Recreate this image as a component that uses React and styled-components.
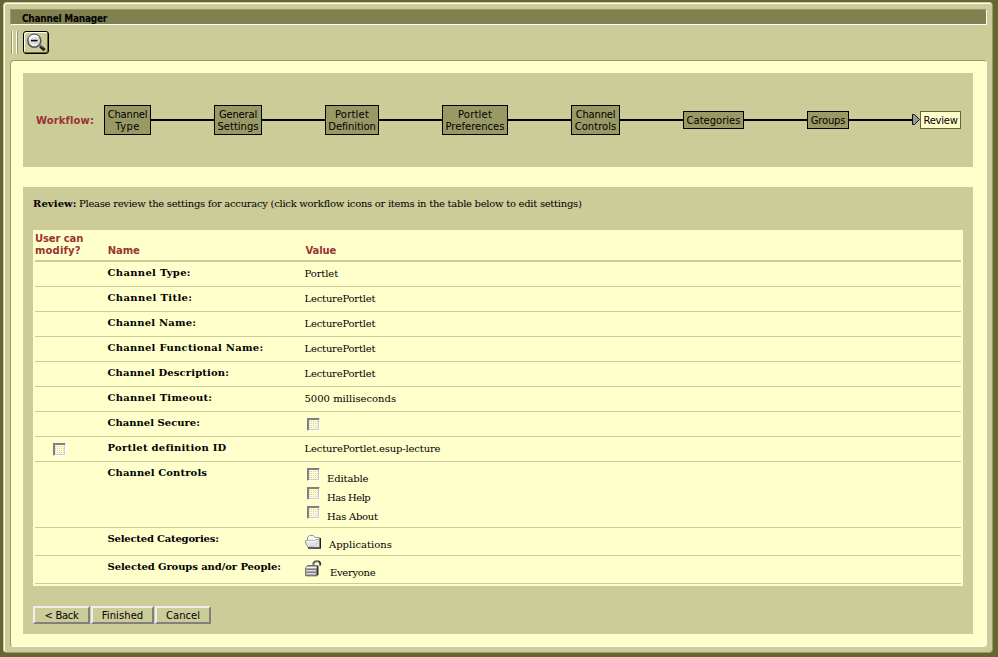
import React from "react";
import styled, { createGlobalStyle } from "styled-components";

const Global = createGlobalStyle`
  body { margin: 0; background: #666633; overflow: hidden; }
  *, *::before, *::after { box-sizing: border-box; }
`;
const sans = '"DejaVu Sans", Verdana, sans-serif';
const serif = '"DejaVu Serif", Georgia, serif';

const Page = styled.div`
  width: 998px;
  height: 657px;
  padding: 2px 5px 4px 3px;
  background: #666633;
  color: #000;
`;
const Frame = styled.div`
  height: 651px;
  border: 1px solid #cccc99;
  border-right-color: #999966;
  border-bottom-color: #999966;
  border-radius: 4px;
  background: #cccc99;
`;
const FrameInner = styled.div`
  height: 649px;
  border: 0 solid #fff;
  border-width: 1px 0 0 1px;
  border-radius: 3px;
  padding: 5px;
  display: flex;
  flex-direction: column;
`;
const TitleBar = styled.header`
  height: 16px;
  flex: none;
  border: 1px solid #999966;
  border-right-color: #fff;
  border-bottom-color: #fff;
  border-radius: 1px;
  background: #808050;
  padding-left: 11px;
  font: bold 10px/17px "DejaVu Sans Condensed", "DejaVu Sans", sans-serif;
  font-stretch: condensed;
  letter-spacing: -0.25px;
`;
const Toolbar = styled.div`
  height: 35px;
  flex: none;
  display: flex;
  align-items: flex-start;
  padding: 5px 0 0 1px;
`;
const Grip = styled.div`
  width: 7px;
  height: 23px;
  margin: 1px 5px 0 0;
  background: linear-gradient(to right, #999966 1px, #fff 1px 2px, transparent 2px 5px, #fff 5px 6px, #999966 6px);
`;
const ToolButton = styled.button`
  width: 26px;
  height: 23px;
  padding: 0;
  border: 1px solid #000;
  border-radius: 3px;
  background: #cccc99;
  box-shadow: inset 1px 1px #fff, inset -1px -1px #666633;
  margin-top: 1px;
  svg { display: block; }
`;
const Panel = styled.main`
  flex: 1;
  border: 1px solid #999966;
  border-right-color: #fff;
  border-bottom-color: #fff;
  border-radius: 4px;
  background: #ffffcc;
  padding: 12px 13px 12px 12px;
  display: flex;
  flex-direction: column;
  gap: 20px;
`;
const Workflow = styled.nav`
  height: 94px;
  flex: none;
  background: #cccc99;
  display: flex;
  align-items: center;
  padding: 0 0 0 13px;
`;
const WorkflowLabel = styled.span`
  width: 68px;
  flex: none;
  color: #993333;
  font: bold 10px/12px ${sans};
  letter-spacing: 0.11px;
  padding-top: 2px;
`;
const Step = styled.div`
  flex: none;
  width: ${(p) => p.$w}px;
  height: ${(p) => (p.$tall ? 30 : 18)}px;
  border: 1px solid ${(p) => (p.$current ? "#666633" : "#000")};
  background: ${(p) => (p.$current ? "#ffffcc" : "#999966")};
  font: 10px/12px ${sans};
  text-align: center;
  white-space: nowrap;
  padding-top: 3px;
`;
const Connector = styled.div`
  flex: none;
  width: 63px;
  height: 2px;
  background: #000;
`;
const Arrow = styled.svg`
  flex: none;
  width: 8px;
  height: 12px;
`;
const Text = styled.span`
  display: block;
  letter-spacing: ${(p) => p.$s || 0}px;
  white-space: nowrap;
`;
const Review = styled.section`
  height: 447px;
  background: #cccc99;
  padding: 10px;
`;
const Intro = styled.div`
  height: 33px;
  display: flex;
  gap: 2.5px;
  font: 10px/14px ${serif};
  b { letter-spacing: 0.09px; }
`;
const Table = styled.div`
  height: 356px;
  background: #ffffcc;
  padding: 2px;
`;
const Row = styled.div`
  height: ${(p) => p.$h || 25}px;
  display: grid;
  grid-template-columns: 72px 197px 1fr;
  border-bottom: 1px solid #cccc99;
`;
const HeadRow = styled(Row)`
  border-bottom-width: 2px;
  align-items: end;
  color: #993333;
  font: bold 10px/12px ${sans};
  padding-bottom: 3px;
`;
const HeadCell = styled.div`
  padding-left: ${(p) => p.$left || 0}px;
`;
const Name = styled.div`
  font: bold 10px/14px ${serif};
  padding: 4px 0 0 0.5px;
`;
const Value = styled.div`
  font: 10px/14px ${serif};
  padding: 5px 0 0 0.5px;
`;
const CheckCell = styled.div`
  padding: ${(p) => p.$pad};
`;
const Check = styled.div`
  flex: none;
  width: 13px;
  height: 13px;
  border: 1px solid #fff;
  border-top-color: #808080;
  border-left-color: #808080;
  box-shadow: inset 1px 1px #808080, inset -1px -1px #cccccc;
  background: #ffffcc conic-gradient(#d4d0c8 25%, #ffffcc 0) 0 0 / 2px 2px;
`;
const Options = styled.div`
  padding: 6px 0 0 3px;
`;
const Option = styled.div`
  display: flex;
  gap: 7px;
  height: 19px;
  font: 10px/14px ${serif};
  ${Text} { padding-top: 4px; }
`;
const IconValue = styled.div`
  display: flex;
  gap: 8px;
  font: 10px/14px ${serif};
  svg { display: block; flex: none; }
  ${Text} { padding-top: 10px; }
`;
const Actions = styled.div`
  display: flex;
  gap: 1px;
  padding-top: 20px;
`;
const Button = styled.button`
  width: ${(p) => p.$w}px;
  height: 18px;
  padding: 1px 0 0;
  border: 2px solid #808080;
  border-top-color: #eeeeee;
  border-left-color: #eeeeee;
  background: #cccc99;
  color: #000;
  font: 10px/12px ${sans};
  ${Text} { text-align: center; }
`;

const steps = [
  [47, [["Channel", -0.2], ["Type", 0.4]]],
  [48, [["General", -0.2], ["Settings", 0]]],
  [54, [["Portlet", 0.2], ["Definition", -0.1]]],
  [66, [["Portlet", 0.2], ["Preferences", 0.02]]],
  [49, [["Channel", -0.2], ["Controls", 0.02]]],
  [61, [["Categories", 0]]],
  [42, [["Groups", -0.2]]],
];
const rows = [
  ["Channel Type:", 0.33, "Portlet", -0.1],
  ["Channel Title:", 0.38, "LecturePortlet", -0.2],
  ["Channel Name:", 0.2, "LecturePortlet", -0.2],
  ["Channel Functional Name:", 0.25, "LecturePortlet", -0.2],
  ["Channel Description:", 0.14, "LecturePortlet", -0.2],
  ["Channel Timeout:", 0.28, "5000 milliseconds", 0],
];

const Magnifier = () => (
  <svg width="24" height="21" viewBox="0 0 24 21">
    <circle cx="10.3" cy="8.8" r="6.5" fill="#dcdcdc" stroke="#555" strokeWidth="1.5" />
    <path d="M5.6 7.5a5 5 0 0 1 8.6-2" fill="none" stroke="#fff" strokeWidth="2.2" />
    <path d="M7 11.5a5 5 0 0 0 6 1" fill="none" stroke="#f6f6f6" strokeWidth="1.4" />
    <path d="M7 8.6h6.5" stroke="#111" strokeWidth="1.6" />
    <path d="M14.9 13l2 1.8" stroke="#777" strokeWidth="2" />
    <path d="M16.4 14.3l4.2 3.9" stroke="#222" strokeWidth="3.2" />
    <path d="M17.2 14.2l1.6 1.4" stroke="#999" strokeWidth="0.8" />
  </svg>
);
const Folder = () => (
  <svg width="16" height="14" viewBox="0 0 16 14">
    <path d="M2.5 5V2l2-1.5h4l1.5 2h4.5V6" fill="#f4f4f4" stroke="#999" />
    <path d="M.5 5.5h9.5l2-1h2.5V12.5H3L.5 8z" fill="#e2e2e2" stroke="#999" />
    <path d="M1.5 6.2h9l2-1" fill="none" stroke="#fff" />
    <path d="M3.5 11.5h5l5-5" fill="none" stroke="#c4c4c4" />
    <path d="M3 13.2h12.4V3" fill="none" stroke="#222" strokeWidth="1.2" />
  </svg>
);
const OpenLock = () => (
  <svg width="17" height="17" viewBox="0 0 17 17">
    <path d="M8.5 6V3.2L10.3 1.3h3.4l1.5 1.5V5.5" fill="none" stroke="#333" strokeWidth="1.8" />
    <path d="M8.7 5V3.4l1.8-1.8h2.5" fill="none" stroke="#aaa" strokeWidth=".7" />
    <path d="M1 7l2-1.5h10.5v9L12 16.2H1z" fill="#333" />
    <path d="M.5 7.5l2-2h10l-1 2v8H.5z" fill="#aaa" stroke="#777" />
    <path d="M1 7.5h10.5" stroke="#f4f4f4" />
    <path d="M2 9.5h8.5M2 12.5h8.5" stroke="#777" />
    <path d="M2 10.5h8.5M2 13.5h8.5" stroke="#e0e0e0" />
  </svg>
);

export default function App() {
  return (
    <Page>
      <Global />
      <Frame>
        <FrameInner>
          <TitleBar>Channel Manager</TitleBar>
          <Toolbar>
            <Grip />
            <ToolButton aria-label="Zoom out"><Magnifier /></ToolButton>
          </Toolbar>
          <Panel>
            <Workflow>
              <WorkflowLabel>Workflow:</WorkflowLabel>
              {steps.map(([w, lines], i) => (
                <React.Fragment key={i}>
                  <Step $w={w} $tall={lines.length > 1}>
                    {lines.map(([t, s]) => <Text key={t} $s={s}>{t}</Text>)}
                  </Step>
                  <Connector />
                </React.Fragment>
              ))}
              <Arrow viewBox="0 0 8 12">
                <path d="M.5 .5h2L7.5 5.5 2.5 10.5h-2z" fill="#999" stroke="#111" />
              </Arrow>
              <Step $w={41} $current><Text $s={-0.25}>Review</Text></Step>
            </Workflow>
            <Review>
              <Intro>
                <b>Review:</b>
                <Text $s={-0.28}>
                  Please review the settings for accuracy (click workflow icons or items in the table below to edit settings)
                </Text>
              </Intro>
              <Table>
                <HeadRow $h={30}>
                  <HeadCell><Text $s={-0.1}>User can</Text><Text $s={0.16}>modify?</Text></HeadCell>
                  <HeadCell $left={0.8}><Text $s={-0.1}>Name</Text></HeadCell>
                  <HeadCell $left={1.5}><Text $s={-0.15}>Value</Text></HeadCell>
                </HeadRow>
                {rows.map(([name, ns, value, vs]) => (
                  <Row key={name}>
                    <span />
                    <Name><Text $s={ns}>{name}</Text></Name>
                    <Value><Text $s={vs}>{value}</Text></Value>
                  </Row>
                ))}
                <Row>
                  <span />
                  <Name><Text $s={0.02}>Channel Secure:</Text></Name>
                  <CheckCell $pad="6px 0 0 3px"><Check /></CheckCell>
                </Row>
                <Row>
                  <CheckCell $pad="6px 0 0 18px"><Check /></CheckCell>
                  <Name><Text $s={0.25}>Portlet definition ID</Text></Name>
                  <Value><Text $s={-0.15}>LecturePortlet.esup-lecture</Text></Value>
                </Row>
                <Row $h={66}>
                  <span />
                  <Name><Text $s={0.11}>Channel Controls</Text></Name>
                  <Options>
                    <Option><Check /><Text $s={-0.13}>Editable</Text></Option>
                    <Option><Check /><Text $s={-0.5}>Has Help</Text></Option>
                    <Option><Check /><Text $s={-0.26}>Has About</Text></Option>
                  </Options>
                </Row>
                <Row $h={28}>
                  <span />
                  <Name><Text $s={-0.2}>Selected Categories:</Text></Name>
                  <IconValue><CheckCell $pad="7px 0 0 1px"><Folder /></CheckCell><Text>Applications</Text></IconValue>
                </Row>
                <Row $h={28}>
                  <span />
                  <Name><Text $s={-0.09}>Selected Groups and/or People:</Text></Name>
                  <IconValue><CheckCell $pad="4px 0 0 1px"><OpenLock /></CheckCell><Text $s={-0.3}>Everyone</Text></IconValue>
                </Row>
              </Table>
              <Actions>
                <Button $w={57}><Text $s={-0.3}>&lt; Back</Text></Button>
                <Button $w={63}><Text $s={0.08}>Finished</Text></Button>
                <Button $w={56}><Text>Cancel</Text></Button>
              </Actions>
            </Review>
          </Panel>
        </FrameInner>
      </Frame>
    </Page>
  );
}
